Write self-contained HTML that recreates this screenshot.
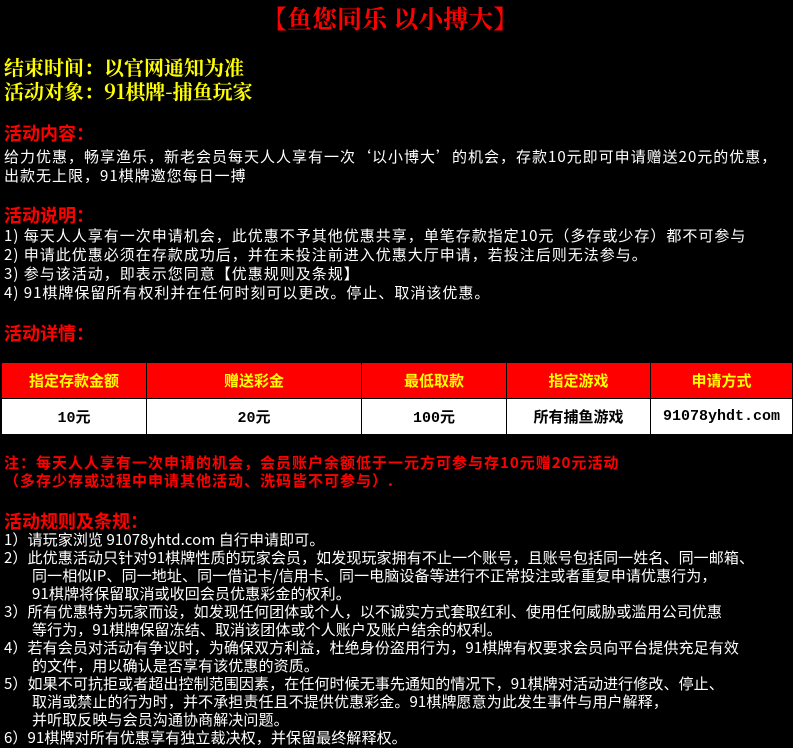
<!DOCTYPE html>
<html><head><meta charset="utf-8"><style>
body{margin:0;width:793px;height:748px;background:#000;overflow:hidden;position:relative;font-family:"Noto Sans CJK SC","WenQuanYi Zen Hei",sans-serif;}
.l{position:absolute;left:4px;white-space:nowrap;line-height:20px;font-size:15px;letter-spacing:1px;color:#fff;}
.y{color:#ff0;font-weight:bold;font-size:20px;line-height:24px;letter-spacing:0;font-family:"Noto Serif CJK SC",serif;}
.r{color:#f00;font-weight:bold;font-size:18px;line-height:24px;letter-spacing:0;}
.n{color:#f00;font-weight:bold;font-size:15px;}
.q{letter-spacing:0.1px;line-height:18px;}
.i{left:32px}
table{position:absolute;left:1px;top:362px;width:792px;border-collapse:collapse;}
td{border:1px solid #000;text-align:center;font-weight:bold;font-size:15px;padding:0;}
tr.h td{background:#f00;color:#ff0;height:35px;}
tr.d td{background:#fff;color:#000;height:35px;font-family:"Liberation Mono","Noto Sans CJK SC",monospace;}
</style></head><body>
<div class="l" style="left:262px;top:3px;font-size:25px;line-height:30px;color:#f00;font-weight:bold;letter-spacing:0;font-family:'Noto Serif CJK SC',serif">【鱼您同乐 以小搏大】</div>
<div class="l y" style="top:55px">结束时间：以官网通知为准</div>
<div class="l y" style="top:79px">活动对象：91棋牌-捕鱼玩家</div>
<div class="l r" style="top:121px">活动内容：</div>
<div class="l" style="top:147px">给力优惠，畅享渔乐，新老会员每天人人享有一次‘以小博大’的机会，存款10元即可申请赠送20元的优惠，</div>
<div class="l" style="top:166px">出款无上限，91棋牌邀您每日一搏</div>
<div class="l r" style="top:203px">活动说明：</div>
<div class="l" style="top:226px">1) 每天人人享有一次申请机会，此优惠不予其他优惠共享，单笔存款指定10元（多存或少存）都不可参与</div>
<div class="l" style="top:245px">2) 申请此优惠必须在存款成功后，并在未投注前进入优惠大厅申请，若投注后则无法参与。</div>
<div class="l" style="top:264px">3) 参与该活动，即表示您同意【优惠规则及条规】</div>
<div class="l" style="top:283px">4) 91棋牌保留所有权利并在任何时刻可以更改。停止、取消该优惠。</div>
<div class="l r" style="top:321px">活动详情：</div>
<table>
<tr class="h"><td style="width:144px">指定存款金额</td><td style="width:214px">赠送彩金</td><td style="width:144px">最低取款</td><td style="width:143px">指定游戏</td><td>申请方式</td></tr>
<tr class="d"><td>10元</td><td>20元</td><td>100元</td><td style="font-family:'Noto Sans CJK SC',sans-serif">所有捕鱼游戏</td><td>91078yhdt.com</td></tr>
</table>
<div class="l n" style="top:453px">注：每天人人享有一次申请的机会，会员账户余额低于一元方可参与存10元赠20元活动</div>
<div class="l n" style="top:471px">（多存少存或过程中申请其他活动、洗码皆不可参与）.</div>
<div class="l r" style="top:509px">活动规则及条规：</div>
<div class="l q" style="top:531px">1）请玩家浏览 91078yhtd.com 自行申请即可。</div>
<div class="l q" style="top:549px">2）此优惠活动只针对91棋牌性质的玩家会员，如发现玩家拥有不止一个账号，且账号包括同一姓名、同一邮箱、</div>
<div class="l q i" style="top:567px">同一相似IP、同一地址、同一借记卡/信用卡、同一电脑设备等进行不正常投注或者重复申请优惠行为，</div>
<div class="l q i" style="top:585px">91棋牌将保留取消或收回会员优惠彩金的权利。</div>
<div class="l q" style="top:603px">3）所有优惠特为玩家而设，如发现任何团体或个人，以不诚实方式套取红利、使用任何威胁或滥用公司优惠</div>
<div class="l q i" style="top:621px">等行为，91棋牌保留冻结、取消该团体或个人账户及账户结余的权利。</div>
<div class="l q" style="top:639px">4）若有会员对活动有争议时，为确保双方利益，杜绝身份盗用行为，91棋牌有权要求会员向平台提供充足有效</div>
<div class="l q i" style="top:657px">的文件，用以确认是否享有该优惠的资质。</div>
<div class="l q" style="top:675px">5）如果不可抗拒或者超出控制范围因素，在任何时候无事先通知的情况下，91棋牌对活动进行修改、停止、</div>
<div class="l q i" style="top:693px">取消或禁止的行为时，并不承担责任且不提供优惠彩金。91棋牌愿意为此发生事件与用户解释，</div>
<div class="l q i" style="top:711px">并听取反映与会员沟通协商解决问题。</div>
<div class="l q" style="top:729px">6）91棋牌对所有优惠享有独立裁决权，并保留最终解释权。</div>
</body></html>
